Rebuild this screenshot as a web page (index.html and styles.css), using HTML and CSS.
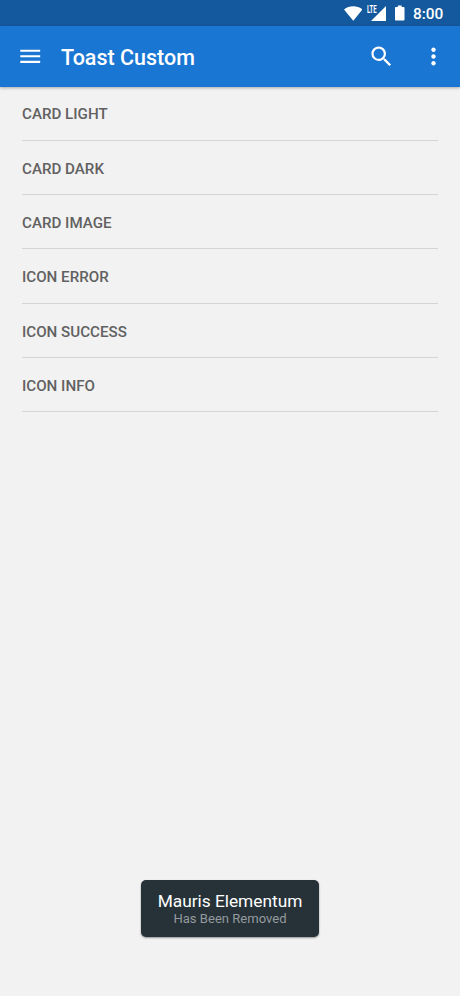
FILE: index.html
```html
<!DOCTYPE html>
<html lang="en">
<head>
<meta charset="utf-8">
<title>Toast Custom</title>
<link rel="stylesheet" href="styles.css">
</head>
<body>
<div class="status">
  <svg class="wifi" viewBox="0 0 19 15"><path d="M0 3.300C2.800 1.100 6 0 9.500 0S16.200 1.100 19 3.300L9.500 15z"/></svg>
  <div class="signal">
    <span class="lte">LTE</span>
    <svg class="bars" viewBox="0 0 15 15"><path d="M15 0v15H0z"/></svg>
  </div>
  <svg class="battery" viewBox="0 0 10 16"><path d="M3 0h4v1.800h2.200q.8 0 .8.8v12.600q0 .8-.8.8H.8q-.8 0-.8-.8V2.600q0-.8.8-.8H3z"/></svg>
  <span class="time">8:00</span>
</div>
<header class="bar">
  <svg class="icon menu" viewBox="0 0 24 24"><path d="M3 18h18v-2H3v2zm0-5h18v-2H3v2zm0-7v2h18V6H3z"/></svg>
  <h1 class="title">Toast Custom</h1>
  <svg class="icon" viewBox="0 0 24 24"><path d="M15.500 14h-.79l-.28-.27A6.471 6.471 0 0 0 16 9.500 6.500 6.500 0 1 0 9.500 16c1.610 0 3.090-.59 4.230-1.570l.27.28v.79l5 4.990L20.490 19l-4.990-5zm-6 0C7.010 14 5 11.990 5 9.500S7.010 5 9.500 5 14 7.010 14 9.500 11.990 14 9.500 14z"/></svg>
  <svg class="icon more" viewBox="0 0 24 24"><path d="M12 8c1.100 0 2-.9 2-2s-.9-2-2-2-2 .9-2 2 .9 2 2 2zm0 2c-1.100 0-2 .9-2 2s.9 2 2 2 2-.9 2-2-.9-2-2-2zm0 6c-1.100 0-2 .9-2 2s.9 2 2 2 2-.9 2-2-.9-2-2-2z"/></svg>
</header>
<main class="content">
  <ul class="list">
    <li class="row"><span>CARD LIGHT</span></li>
    <li class="row"><span>CARD DARK</span></li>
    <li class="row"><span>CARD IMAGE</span></li>
    <li class="row"><span>ICON ERROR</span></li>
    <li class="row"><span>ICON SUCCESS</span></li>
    <li class="row"><span>ICON INFO</span></li>
  </ul>
  <div class="toast">
    <div class="toast-title">Mauris Elementum</div>
    <div class="toast-text">Has Been Removed</div>
  </div>
</main>
</body>
</html>
```
FILE: styles.css
```css
* { box-sizing: border-box; }
body {
  margin: 0;
  height: 996px;
  display: flex;
  flex-direction: column;
  background: #f2f2f2;
  font-family: Roboto, sans-serif;
  overflow: hidden;
}
svg { display: block; fill: #fff; flex: none; }
.status {
  height: 26px;
  flex: none;
  display: flex;
  align-items: center;
  justify-content: flex-end;
  padding-right: 17px;
  background: #14599d;
  color: #fff;
}
.wifi { width: 18.500px; height: 15px; }
.signal {
  display: flex;
  align-items: flex-start;
  width: 19px;
  margin-left: 5px;
}
.lte {
  width: 4px;
  margin-top: -1px;
  font: 700 10px/9px Roboto, sans-serif;
  transform: scaleX(.6);
  transform-origin: left;
}
.bars { width: 15px; height: 15px; }
.battery { width: 9.500px; height: 16px; margin-left: 9px; }
.time {
  width: 30px;
  margin-left: 8.500px;
  font-size: 15.400px;
  font-weight: 500;
  line-height: 18px;
  padding-top: 2px;
}
.bar {
  height: 60.500px;
  flex: none;
  display: flex;
  align-items: center;
  padding: 0 13px 0 17px;
  background: #1976d2;
  color: #fff;
  box-shadow: 0 1px 3px rgba(0, 0, 0, .3);
}
.icon { width: 27px; height: 27px; }
.menu { width: 26.500px; height: 26.500px; }
.more { margin-left: 25px; }
.title {
  flex: 1;
  margin: 0 0 0 17.500px;
  padding-top: 3px;
  font-size: 21.500px;
  font-weight: 500;
  line-height: 28px;
}
.content {
  flex: 1;
  display: flex;
  flex-direction: column;
  justify-content: space-between;
  align-items: center;
  padding-bottom: 59px;
}
.list {
  width: 416px;
  margin: 0;
  padding: 0;
  list-style: none;
}
.row {
  height: 54.300px;
  display: flex;
  align-items: center;
  padding-top: 2.700px;
  border-bottom: 1px solid #d5d5d5;
  color: #616161;
  font-size: 15.150px;
  font-weight: 500;
  line-height: 20px;
}
.toast {
  width: 178px;
  height: 57px;
  padding-top: 11px;
  border-radius: 5px;
  background: #263238;
  box-shadow: 0 1px 2px rgba(0, 0, 0, .4);
  text-align: center;
  white-space: nowrap;
}
.toast-title { color: #fff; font-size: 17.300px; line-height: 20px; }
.toast-text { color: #949a9d; font-size: 13.050px; line-height: 16px; }
```
